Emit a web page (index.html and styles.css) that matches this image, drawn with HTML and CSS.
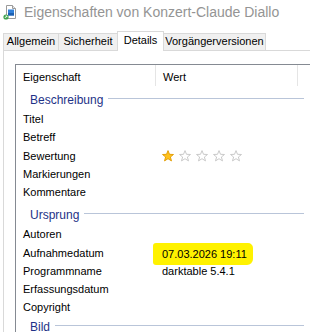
FILE: index.html
```html
<!DOCTYPE html>
<html>
<head>
	<title>Eigenschaften</title>
	<meta charset="utf-8">
	<link rel="stylesheet" href="styles.css">
</head>
<body>

	<div class="titlebar">
		<svg class="appicon" width="14" height="16" viewBox="0 0 14 16">
			<path d="M3.5 1.5h6l3 3v10h-9z" fill="#fff" stroke="#9a9a9a"/>
			<path d="M9.5 1.5v3h3" fill="#e8e8e8" stroke="#9a9a9a"/>
			<rect x="5" y="5.5" width="6" height="6" fill="#2f7fd8"/>
			<rect x="5" y="9" width="6" height="2.5" fill="#1c5fb0"/>
			<circle cx="3" cy="13" r="2.6" fill="#3fa34d"/>
			<path d="M1.8 14l1.8-1.8M2.6 12h1.3v1.3" stroke="#fff" stroke-width="0.9" fill="none"/>
		</svg>
		<span class="title">Eigenschaften von Konzert-Claude Diallo</span>
	</div>

	<div class="tabs">
		<div class="tab tab-allg">Allgemein</div>
		<div class="tab tab-sich">Sicherheit</div>
		<div class="tab tab-det active">Details</div>
		<div class="tab tab-vorg">Vorgängerversionen</div>
	</div>

	<div class="panel">
		<div class="listbox">
			<div class="head">
				<div class="col-name">Eigenschaft</div>
				<div class="col-value">Wert</div>
				<div class="col-rest"></div>
			</div>

			<div class="group"><span>Beschreibung</span></div>
			<div class="row"><div class="name">Titel</div><div class="value"></div></div>
			<div class="row"><div class="name">Betreff</div><div class="value"></div></div>
			<div class="row">
				<div class="name">Bewertung</div>
				<div class="value stars">
					<svg width="12" height="12" viewBox="0 0 12 12"><path class="star on" d="M6 .6l1.5 3.7 4 .2-3.1 2.5 1.1 3.9L6 8.7l-3.5 2.2 1.1-3.9L.5 4.5l4-.2z"/></svg>
					<svg width="12" height="12" viewBox="0 0 12 12"><path class="star" d="M6 .6l1.5 3.7 4 .2-3.1 2.5 1.1 3.9L6 8.7l-3.5 2.2 1.1-3.9L.5 4.5l4-.2z"/></svg>
					<svg width="12" height="12" viewBox="0 0 12 12"><path class="star" d="M6 .6l1.5 3.7 4 .2-3.1 2.5 1.1 3.9L6 8.7l-3.5 2.2 1.1-3.9L.5 4.5l4-.2z"/></svg>
					<svg width="12" height="12" viewBox="0 0 12 12"><path class="star" d="M6 .6l1.5 3.7 4 .2-3.1 2.5 1.1 3.9L6 8.7l-3.5 2.2 1.1-3.9L.5 4.5l4-.2z"/></svg>
					<svg width="12" height="12" viewBox="0 0 12 12"><path class="star" d="M6 .6l1.5 3.7 4 .2-3.1 2.5 1.1 3.9L6 8.7l-3.5 2.2 1.1-3.9L.5 4.5l4-.2z"/></svg>
				</div>
			</div>
			<div class="row"><div class="name">Markierungen</div><div class="value"></div></div>
			<div class="row"><div class="name">Kommentare</div><div class="value"></div></div>

			<div class="group"><span>Ursprung</span></div>
			<div class="row"><div class="name">Autoren</div><div class="value"></div></div>
			<div class="row"><div class="name">Aufnahmedatum</div><div class="value"><span class="marked">07.03.2026 19:11</span></div></div>
			<div class="row"><div class="name">Programmname</div><div class="value">darktable 5.4.1</div></div>
			<div class="row"><div class="name">Erfassungsdatum</div><div class="value"></div></div>
			<div class="row"><div class="name">Copyright</div><div class="value"></div></div>

			<div class="group last"><span>Bild</span></div>
		</div>
	</div>

</body>
</html>
```

FILE: styles.css
```css
body{
	margin: 0;
	width: 310px;
	height: 332px;
	overflow: hidden;
	background: #fff;
	font-family: "Liberation Sans", Arial, sans-serif;
	font-size: 11px;
	color: #000;
}

.titlebar{
	height: 24px;
	display: flex;
	align-items: center;
	padding-left: 3px;
}
.appicon{
	margin-top: -1px;
}
.title{
	margin-left: 7px;
	font-size: 14px;
	color: #949494;
	white-space: nowrap;
}

.tabs{
	display: flex;
	align-items: flex-end;
	height: 26px;
	padding-left: 3px;
	background: #fff;
}
.tab{
	box-sizing: border-box;
	height: 17px;
	line-height: 15px;
	text-align: center;
	background: #f0f0f0;
	border: 1px solid #d9d9d9;
	border-bottom: none;
	margin-right: -1px;
	white-space: nowrap;
}
.tab-allg{ width: 56px; }
.tab-sich{ width: 60px; }
.tab-det{ width: 47px; }
.tab-vorg{ width: 103px; }
.tab.active{
	height: 20px;
	line-height: 17px;
	background: #fff;
	position: relative;
	z-index: 1;
	margin-bottom: -1px;
}

.panel{
	box-sizing: border-box;
	border-top: 1px solid #d9d9d9;
	border-left: 1px solid #d9d9d9;
	margin-left: 3px;
	padding: 13px 0 0 11px;
	height: 282px;
}

.listbox{
	box-sizing: border-box;
	width: 296px;
	height: 268px;
	overflow: hidden;
	border: 1px solid #858a92;
	border-right: none;
	border-bottom: none;
}

.head{
	display: flex;
	height: 21px;
}
.head div{
	box-sizing: border-box;
	padding: 4px 0 0 7px;
	line-height: 17px;
}
.col-name{ width: 139px; }
.col-value{
	width: 142px;
	border-left: 1px solid #e5e5e5;
}
.col-rest{
	flex: 1;
	border-left: 1px solid #e5e5e5;
}

.group{
	display: flex;
	align-items: center;
	height: 24px;
	box-sizing: border-box;
	padding: 4px 0 0 14px;
	width: 288px;
	font-size: 12px;
	color: #1e3287;
	line-height: 20px;
}
.group.last{
	padding-top: 0;
	height: 20px;
}
.group::after{
	content: "";
	flex: 1;
	height: 1px;
	background: #b9c5d9;
	margin: -3px 0 0 5px;
}

.row{
	display: flex;
	height: 18.25px;
	line-height: 18px;
}
.name{
	box-sizing: border-box;
	width: 139px;
	padding-left: 7px;
	white-space: nowrap;
}
.value{
	padding-left: 7px;
	white-space: nowrap;
}

.stars{
	display: flex;
	align-items: center;
	gap: 5px;
	padding-top: 1px;
}
.star{
	fill: #fff;
	stroke: #c4c4c4;
	stroke-width: 0.9;
}
.star.on{
	fill: #ffc21c;
	stroke: #e09a00;
}

.marked{
	position: relative;
	top: 1px;
}
.marked::before{
	content: "";
	position: absolute;
	left: -9px;
	right: -6px;
	top: -5px;
	bottom: -5px;
	background: #fff200;
	border-radius: 3px 5px 6px 3px;
	z-index: -1;
}
.row:has(.marked){
	position: relative;
	z-index: 0;
}
```
